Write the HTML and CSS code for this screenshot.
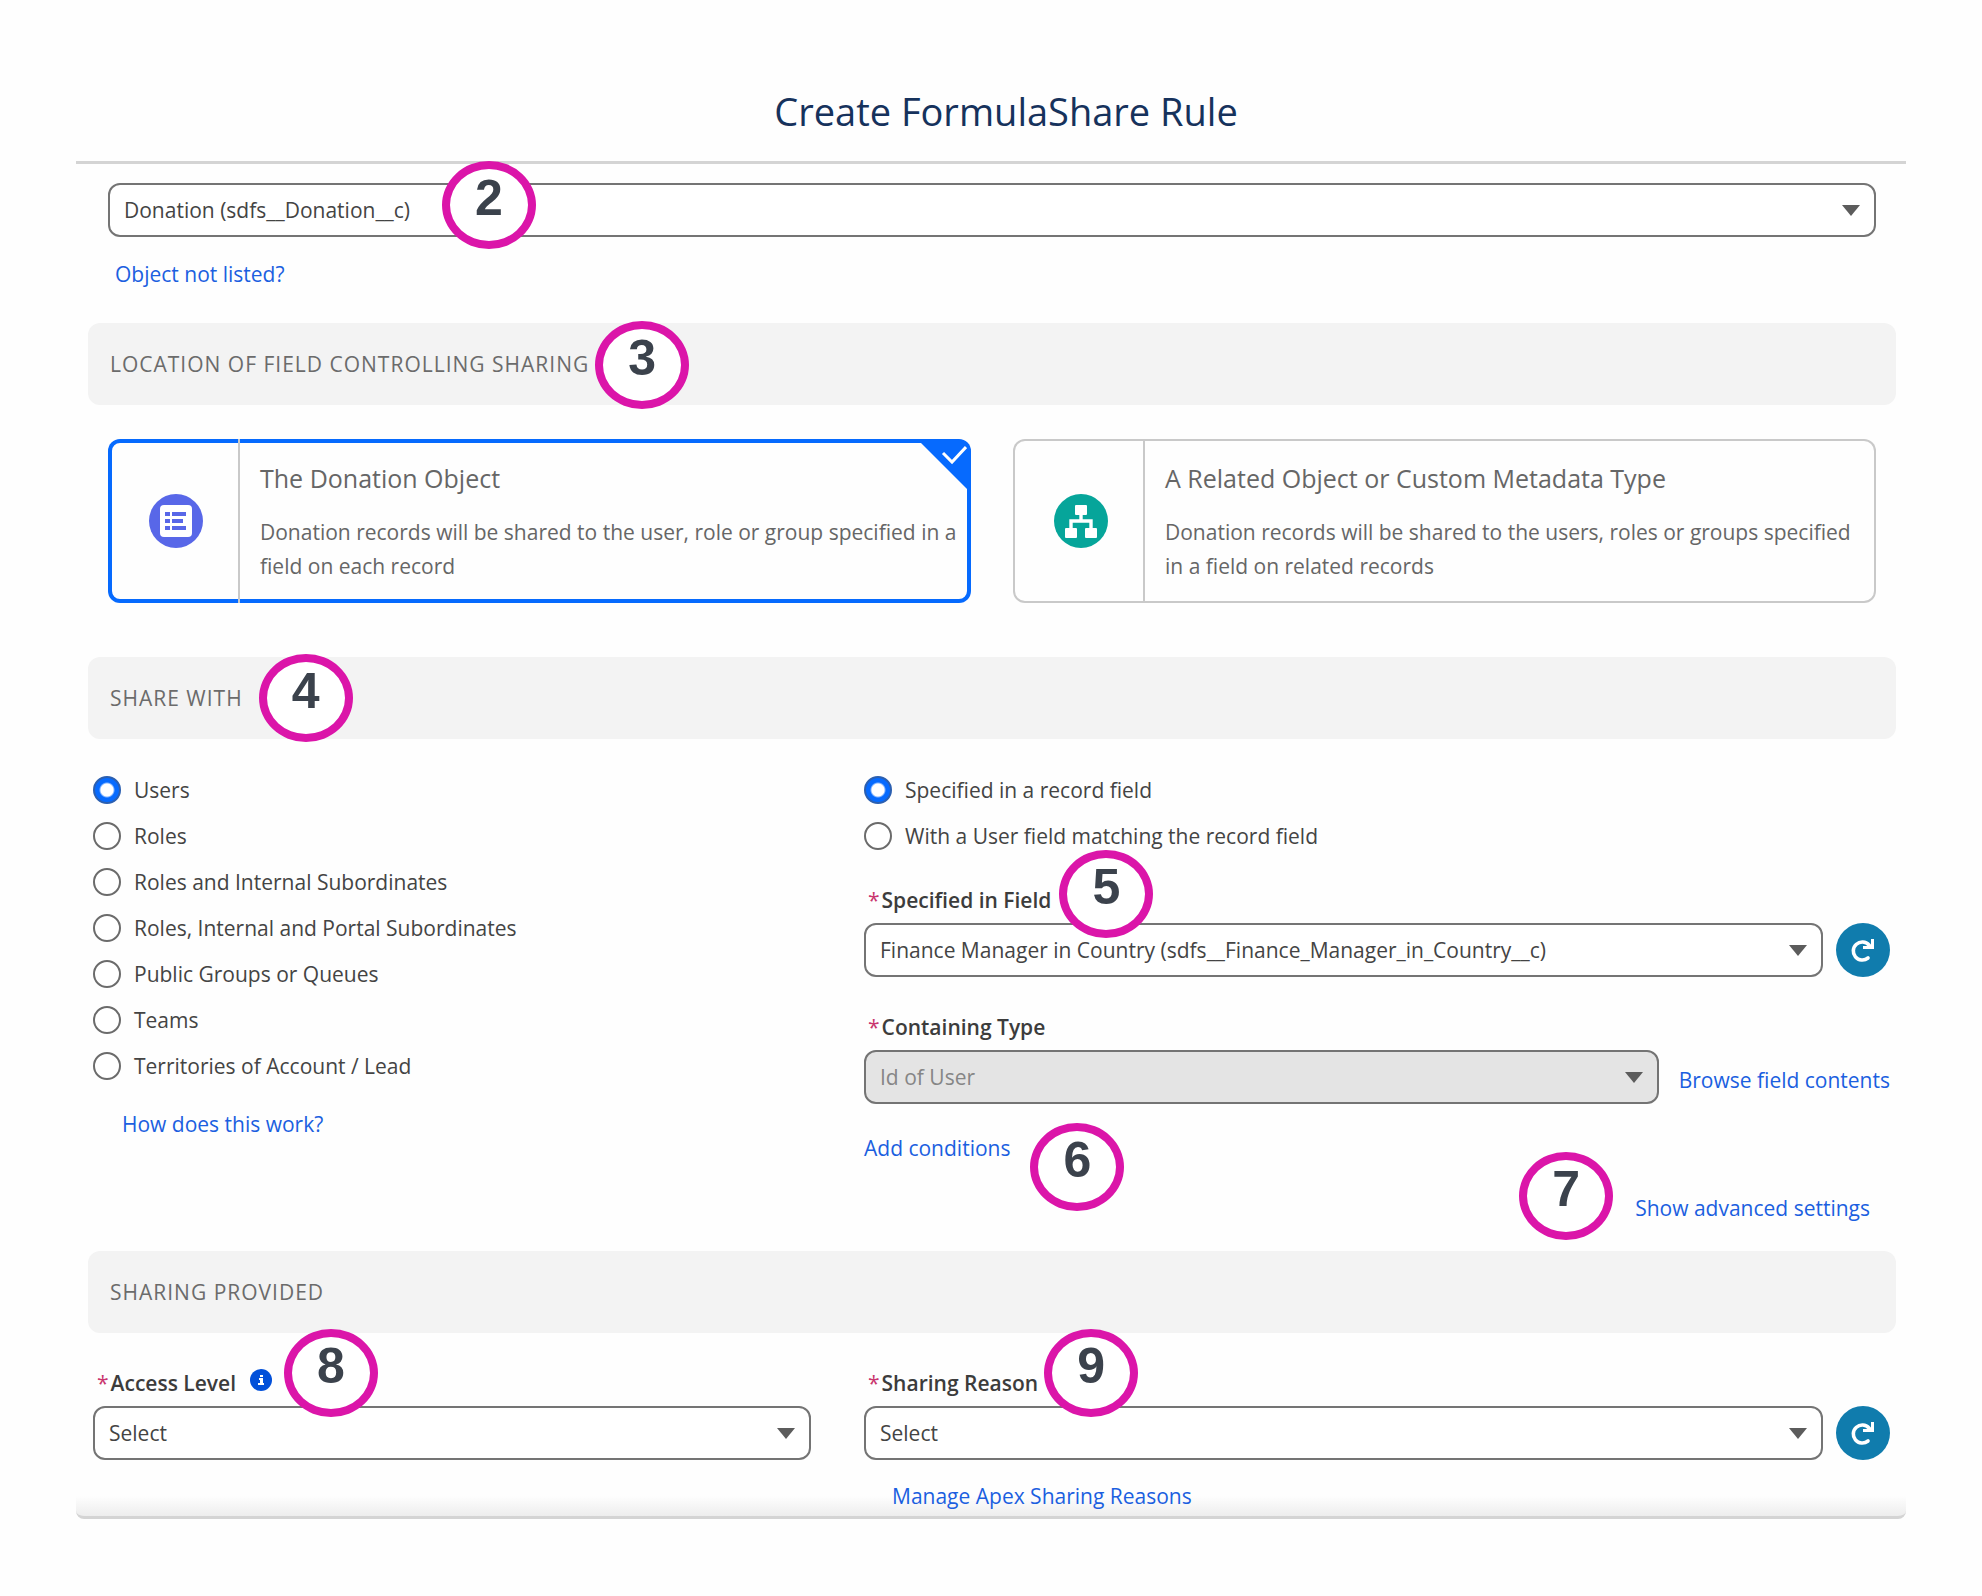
FILE: index.html
```html
<!DOCTYPE html>
<html lang="en">
<head>
    <meta charset="UTF-8">
    <meta name="viewport" content="width=device-width, initial-scale=1.0">
    <title>Create FormulaShare Rule</title>
    <link rel="stylesheet" href="styles.css">
</head>
<body>
    <main class="modal">
        <header class="modal-header">
            <h1>Create FormulaShare Rule</h1>
        </header>
        <form class="modal-content">
            <div class="object-row">
                <div class="select-wrap">
                    <select class="select" aria-label="Object">
                        <option>Donation (sdfs__Donation__c)</option>
                    </select>
                </div>
                <a href="#" class="link object-link">Object not listed?</a>
                <span class="badge badge-2">2</span>
            </div>

            <h2 class="section-title"><span class="anchor">Location of field controlling sharing<span class="badge badge-3">3</span></span></h2>
            <div class="cards">
                <label class="card card-selected">
                    <input type="radio" name="location" class="card-input" checked>
                    <span class="card-icon">
                        <svg width="54" height="54" viewBox="0 0 54 54">
                            <circle cx="27" cy="27" r="27" fill="#5867e8"/>
                            <rect x="11" y="11" width="32" height="32" rx="4" fill="#fff"/>
                            <path fill="#5867e8" d="M16 18h5v4h-5zM23 18h14v4H23zM16 25h5v4h-5zM23 25h11v4H23zM16 32h5v4h-5zM23 32h14v4H23z"/>
                        </svg>
                    </span>
                    <span class="card-text">
                        <span class="card-title">The Donation Object</span>
                        <span class="card-desc">Donation records will be shared to the user, role or group specified in a field on each record</span>
                    </span>
                    <svg class="card-check" width="46" height="46" viewBox="0 0 46 46">
                        <path d="M0 0h46v46z" fill="#066afe"/>
                        <path d="M22 10l9 9L45 4" fill="none" stroke="#fff" stroke-width="3"/>
                    </svg>
                </label>
                <label class="card">
                    <input type="radio" name="location" class="card-input">
                    <span class="card-icon">
                        <svg width="54" height="54" viewBox="0 0 54 54">
                            <circle cx="27" cy="27" r="27" fill="#06a59a"/>
                            <rect x="21" y="11" width="12" height="10" rx="1" fill="#fff"/>
                            <rect x="11" y="34" width="12" height="10" rx="1" fill="#fff"/>
                            <rect x="31" y="34" width="12" height="10" rx="1" fill="#fff"/>
                            <path d="M27 20v7M17 35v-8h20v8" fill="none" stroke="#fff" stroke-width="3.4"/>
                        </svg>
                    </span>
                    <span class="card-text">
                        <span class="card-title">A Related Object or Custom Metadata Type</span>
                        <span class="card-desc">Donation records will be shared to the users, roles or groups specified in a field on related records</span>
                    </span>
                </label>
            </div>

            <h2 class="section-title"><span class="anchor">Share with<span class="badge badge-4">4</span></span></h2>
            <div class="columns share-with">
                <div class="radio-list">
                    <label class="radio"><input type="radio" name="shareWith" checked>Users</label>
                    <label class="radio"><input type="radio" name="shareWith">Roles</label>
                    <label class="radio"><input type="radio" name="shareWith">Roles and Internal Subordinates</label>
                    <label class="radio"><input type="radio" name="shareWith">Roles, Internal and Portal Subordinates</label>
                    <label class="radio"><input type="radio" name="shareWith">Public Groups or Queues</label>
                    <label class="radio"><input type="radio" name="shareWith">Teams</label>
                    <label class="radio"><input type="radio" name="shareWith">Territories of Account / Lead</label>
                    <a href="#" class="link help-link">How does this work?</a>
                </div>
                <div class="settings">
                    <div class="radio-list">
                        <label class="radio"><input type="radio" name="specified" checked>Specified in a record field</label>
                        <label class="radio"><input type="radio" name="specified">With a User field matching the record field</label>
                    </div>
                    <div class="field">
                        <div class="field-label">
                            <label for="field" class="anchor"><abbr>*</abbr>Specified in Field<span class="badge badge-5">5</span></label>
                        </div>
                        <div class="field-row">
                            <div class="select-wrap">
                                <select class="select" id="field">
                                    <option>Finance Manager in Country (sdfs__Finance_Manager_in_Country__c)</option>
                                </select>
                            </div>
                            <button type="button" class="refresh-btn" aria-label="Refresh">
                                <svg width="26" height="26" viewBox="0 0 26 26">
                                    <path d="M18 21a9 9 0 1 1 1-13" fill="none" stroke="#fff" stroke-width="3.6" stroke-linecap="round"/>
                                    <path d="M24 2v10H13V9h6l2-2V2z" fill="#fff"/>
                                </svg>
                            </button>
                        </div>
                    </div>
                    <div class="field">
                        <div class="field-label">
                            <label for="type"><abbr>*</abbr>Containing Type</label>
                        </div>
                        <div class="field-row field-row-link">
                            <div class="select-wrap">
                                <select class="select" id="type" disabled>
                                    <option>Id of User</option>
                                </select>
                            </div>
                            <a href="#" class="link">Browse field contents</a>
                        </div>
                    </div>
                    <div class="conditions">
                        <a href="#" class="link anchor">Add conditions<span class="badge badge-6">6</span></a>
                    </div>
                    <div class="advanced">
                        <a href="#" class="link anchor"><span class="badge badge-7">7</span>Show advanced settings</a>
                    </div>
                </div>
            </div>

            <h2 class="section-title">Sharing provided</h2>
            <div class="columns">
                <div class="field">
                    <div class="field-label">
                        <label for="access"><abbr>*</abbr>Access Level</label>
                        <span class="anchor">
                            <svg class="info" width="22" height="22" viewBox="0 0 22 22">
                                <circle cx="11" cy="11" r="11" fill="#0250d9"/>
                                <path d="M10 6h3v2h-3zM9 9h4v5h1v2H8v-2h2v-3H9z" fill="#fff"/>
                            </svg>
                            <span class="badge badge-8">8</span>
                        </span>
                    </div>
                    <div class="select-wrap">
                        <select class="select" id="access">
                            <option>Select</option>
                        </select>
                    </div>
                </div>
                <div class="field">
                    <div class="field-label">
                        <label for="reason" class="anchor"><abbr>*</abbr>Sharing Reason<span class="badge badge-9">9</span></label>
                    </div>
                    <div class="field-row">
                        <div class="select-wrap">
                            <select class="select" id="reason">
                                <option>Select</option>
                            </select>
                        </div>
                        <button type="button" class="refresh-btn" aria-label="Refresh">
                            <svg width="26" height="26" viewBox="0 0 26 26">
                                <path d="M18 21a9 9 0 1 1 1-13" fill="none" stroke="#fff" stroke-width="3.6" stroke-linecap="round"/>
                                <path d="M24 2v10H13V9h6l2-2V2z" fill="#fff"/>
                            </svg>
                        </button>
                    </div>
                    <a href="#" class="link reason-link">Manage Apex Sharing Reasons</a>
                </div>
            </div>
        </form>
    </main>
</body>
</html>
```

FILE: styles.css
```css
* {
    box-sizing: border-box;
}
body {
    margin: 0;
    background: #fefefe;
    color: #444;
    font-family: 'Open Sans', 'Noto Sans', sans-serif;
    font-size: 21px;
    line-height: 28px;
}
.modal {
    margin: 60px 76px;
}
.modal-header {
    padding: 25px 0 24px 30px;
    border-bottom: 3px solid #d4d4d4;
    text-align: center;
}
h1 {
    margin: 0;
    color: #16325c;
    font-size: 38px;
    font-weight: 400;
    line-height: 52px;
}
.modal-content {
    padding: 19px 10px 0 12px;
    background: linear-gradient(to top, #ededed, #fefefe 20px);
    border-bottom: 3px solid #d4d4d4;
    border-radius: 0 0 8px 8px;
}
.object-row {
    position: relative;
    padding: 0 20px;
}
.link {
    color: #1b5fe0;
    text-decoration: none;
}
.link:hover {
    text-decoration: underline;
}
.object-link {
    display: inline-block;
    margin: 23px 0 35px 7px;
}

/* Selects */
.select-wrap {
    position: relative;
    flex: 1;
}
.select-wrap::after {
    content: '';
    position: absolute;
    top: 22px;
    right: 16px;
    border: 9px solid transparent;
    border-top: 11px solid #5c5c5c;
    border-bottom: 0;
    pointer-events: none;
}
.select {
    display: block;
    width: 100%;
    height: 54px;
    padding: 0 40px 0 14px;
    appearance: none;
    background: #fff;
    border: 2px solid #747474;
    border-radius: 12px;
    color: #444;
    font: inherit;
}
.select:disabled {
    background: #e4e4e4;
    color: #868686;
    opacity: 1;
}

/* Section headings */
.section-title {
    margin: 0;
    padding: 27px 22px;
    background: #f3f3f3;
    border-radius: 12px;
    color: #6b6b6b;
    font-size: 21px;
    font-weight: 400;
    letter-spacing: 1px;
    text-transform: uppercase;
}

/* Location cards */
.cards {
    display: grid;
    grid-template-columns: 1fr 1fr;
    gap: 42px;
    padding: 34px 20px 54px;
}
.card {
    position: relative;
    display: flex;
    border-radius: 12px;
    box-shadow: inset 0 0 0 2px #c9c9c9;
    color: #666;
    overflow: hidden;
    cursor: pointer;
}
.card-selected {
    box-shadow: inset 0 0 0 4px #066afe;
}
.card-input {
    position: absolute;
    opacity: 0;
}
.card-icon {
    display: flex;
    align-items: center;
    justify-content: center;
    width: 132px;
    padding-left: 6px;
    border-right: 2px solid #c9c9c9;
}
.card-text {
    flex: 1;
    padding: 22px 12px 20px 20px;
}
.card-title {
    display: block;
    margin-bottom: 20px;
    font-size: 25px;
    line-height: 34px;
}
.card-desc {
    display: block;
    line-height: 34px;
}
.card-check {
    position: absolute;
    top: 4px;
    right: 4px;
}

/* Two column area */
.columns {
    display: grid;
    grid-template-columns: 718px 1fr;
    gap: 53px;
    padding: 36px 6px 6px 5px;
}
.share-with {
    padding: 37px 6px 29px 5px;
}
.radio-list {
    display: flex;
    flex-direction: column;
    align-items: flex-start;
    gap: 18px;
}
.radio {
    display: flex;
    align-items: center;
    gap: 13px;
}
.radio input {
    width: 28px;
    height: 28px;
    margin: 0;
    appearance: none;
    background: #fff;
    border: 2px solid #6b6b6b;
    border-radius: 50%;
}
.radio input:checked {
    background: radial-gradient(circle, #fff 6px, #066afe 8px);
    border-color: #2b5fb0;
}
.help-link {
    margin: 12px 0 0 29px;
}
.field-label {
    display: flex;
    gap: 14px;
    margin-bottom: 9px;
    padding-left: 4px;
    color: #3c3c3c;
    font-weight: 600;
}
.field-label abbr {
    margin-right: 2px;
    color: #c9356e;
    font-weight: 400;
}
.info {
    display: block;
}
.field-row {
    display: flex;
    align-items: center;
    gap: 13px;
}
.field-row-link {
    gap: 20px;
}
.field-row-link .link {
    padding-top: 6px;
}
.settings .field {
    margin-top: 36px;
}
.refresh-btn {
    display: flex;
    align-items: center;
    justify-content: center;
    width: 54px;
    height: 54px;
    padding: 0;
    background: #107cad;
    border: 0;
    border-radius: 50%;
    cursor: pointer;
}
.conditions {
    margin-top: 30px;
}
.advanced {
    margin-top: 32px;
    padding-right: 20px;
    text-align: right;
}
.reason-link {
    display: inline-block;
    margin: 22px 0 0 28px;
}

/* Numbered callouts */
.anchor {
    position: relative;
}
.badge {
    position: absolute;
    width: 94px;
    height: 88px;
    background: #fff;
    border: 8px solid #db15a9;
    border-radius: 50%;
    color: #3b424c;
    font-family: 'Liberation Sans', Arial, sans-serif;
    font-size: 50px;
    font-weight: 700;
    letter-spacing: 0;
    line-height: 58px;
    text-align: center;
    z-index: 1;
}
.badge-2 {
    top: -22px;
    left: 354px;
}
.badge-3 {
    top: -29px;
    left: calc(100% + 6px);
}
.badge-4 {
    top: -30px;
    left: calc(100% + 16px);
}
.badge-5 {
    top: -36px;
    left: calc(100% + 8px);
}
.badge-6 {
    top: -11px;
    left: calc(100% + 20px);
}
.badge-7 {
    top: -42px;
    right: calc(100% + 22px);
}
.badge-8 {
    top: -40px;
    left: calc(100% + 12px);
}
.badge-9 {
    top: -40px;
    left: calc(100% + 6px);
}
```
